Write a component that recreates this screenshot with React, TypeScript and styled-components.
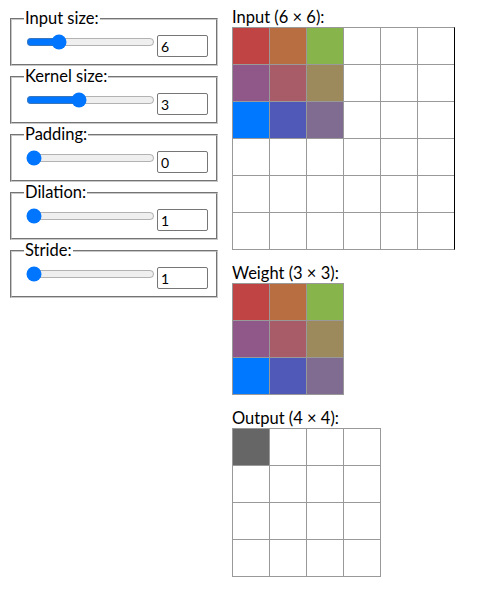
import React, { useState } from "react";
import styled, { createGlobalStyle } from "styled-components";

const GlobalStyle = createGlobalStyle`
  body {
    margin: 8px;
    font-family: "Lato", "Liberation Sans", sans-serif;
    font-size: 16px;
    color: #000;
    background: #fff;
  }
`;

const Page = styled.div`
  display: flex;
  align-items: flex-start;
  gap: 12px;
`;

const Controls = styled.div`
  display: flex;
  flex-direction: column;
  margin: 0 2px;
`;

const Field = styled.fieldset`
  box-sizing: border-box;
  width: 208px;
  min-width: 0;
  margin: 0;
  padding: 5px 12px 7px;
  border: 2px groove #c8c8c8;
`;

const Legend = styled.legend`
  padding: 0 1px 0 1px;
  line-height: 21px;
  font-size: 16.5px;
`;

const Row = styled.div`
  display: flex;
  align-items: flex-start;
  height: 23px;
`;

const Slider = styled.input`
  flex: none;
  width: 129px;
  height: 16px;
  margin: 0 2px;
`;

const NumberBox = styled.input`
  flex: none;
  box-sizing: border-box;
  width: 51px;
  height: 22px;
  margin: 1px 0 0 0;
  padding: 1px 3px;
  border: 1px solid #767676;
  border-radius: 2px;
  font-family: "Lato", "Liberation Sans", sans-serif;
  font-size: 14px;
`;

const Views = styled.div`
  display: flex;
  flex-direction: column;
  gap: 14px;
`;

const Section = styled.div`
  display: flex;
  flex-direction: column;
`;

const Caption = styled.div`
  line-height: 19px;
  height: 19px;
  font-size: 16.5px;
`;

const Grid = styled.div<{ $cols: number; $edge?: boolean }>`
  display: grid;
  grid-template-columns: repeat(${(p) => p.$cols}, 36px);
  grid-auto-rows: 36px;
  gap: 1px;
  width: max-content;
  background: #999;
  border: 1px solid #999;
  border-right-color: ${(p) => (p.$edge ? "#000" : "#999")};
`;

const Cell = styled.div<{ $fill?: string }>`
  background: ${(p) => p.$fill || "#fff"};
`;

const kernel = [
  "#c04444", "#b86e40", "#88b44c",
  "#905888", "#a85c68", "#9c8a5c",
  "#0078ff", "#5058b8", "#806c90",
];

function Matrix({ n, fills, edge }: { n: number; fills: (string | undefined)[]; edge?: boolean }) {
  return (
    <Grid $cols={n} $edge={edge}>
      {Array.from({ length: n * n }, (_, i) => (
        <Cell key={i} $fill={fills[i]} />
      ))}
    </Grid>
  );
}

function Control({ label, value, min, max, onChange }: {
  label: string; value: number; min: number; max: number; onChange: (v: number) => void;
}) {
  return (
    <Field>
      <Legend>{label}</Legend>
      <Row>
        <Slider type="range" min={min} max={max} value={value}
          onChange={(e) => onChange(Number(e.target.value))} />
        <NumberBox type="text" value={value}
          onChange={(e) => onChange(Number(e.target.value) || 0)} />
      </Row>
    </Field>
  );
}

export default function App() {
  const [size, setSize] = useState(6);
  const [k, setK] = useState(3);
  const [pad, setPad] = useState(0);
  const [dil, setDil] = useState(1);
  const [stride, setStride] = useState(1);

  const out = Math.max(1, Math.floor((size + 2 * pad - dil * (k - 1) - 1) / stride) + 1);

  const inputFills: (string | undefined)[] = [];
  for (let r = 0; r < k && r < 3; r++)
    for (let c = 0; c < k && c < 3; c++) inputFills[r * size + c] = kernel[r * 3 + c];

  return (
    <>
      <GlobalStyle />
      <Page>
        <Controls>
          <Control label="Input size:" value={size} min={1} max={24} onChange={setSize} />
          <Control label="Kernel size:" value={k} min={1} max={6} onChange={setK} />
          <Control label="Padding:" value={pad} min={0} max={6} onChange={setPad} />
          <Control label="Dilation:" value={dil} min={1} max={6} onChange={setDil} />
          <Control label="Stride:" value={stride} min={1} max={6} onChange={setStride} />
        </Controls>
        <Views>
          <Section>
            <Caption>Input ({size} × {size}):</Caption>
            <Matrix n={size} fills={inputFills} edge />
          </Section>
          <Section>
            <Caption>Weight ({k} × {k}):</Caption>
            <Matrix n={k} fills={kernel} />
          </Section>
          <Section>
            <Caption>Output ({out} × {out}):</Caption>
            <Matrix n={out} fills={["#666"]} />
          </Section>
        </Views>
      </Page>
    </>
  );
}
